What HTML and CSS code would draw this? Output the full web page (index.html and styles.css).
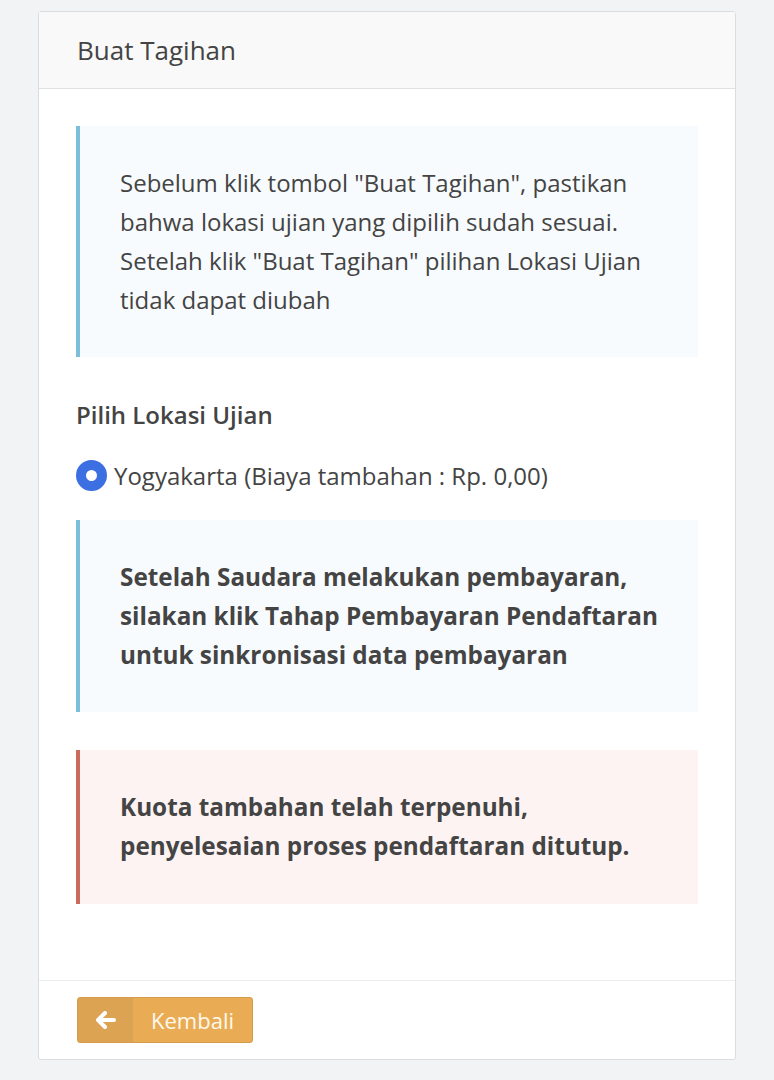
FILE: index.html
```html
<!DOCTYPE html>
<html lang="id">
<head>
<meta charset="utf-8">
<title>Buat Tagihan</title>
<link rel="stylesheet" href="styles.css">
</head>
<body>
<div class="card">
  <div class="card-header">Buat Tagihan</div>
  <div class="card-body">
    <div class="callout callout-info">
      <p>Sebelum klik tombol "Buat Tagihan", pastikan bahwa lokasi ujian yang dipilih sudah sesuai. Setelah klik "Buat Tagihan" pilihan Lokasi Ujian tidak dapat diubah</p>
    </div>
    <div class="field-label">Pilih Lokasi Ujian</div>
    <label class="radio-row">
      <span class="radio"></span>
      <span>Yogyakarta (Biaya tambahan : Rp. 0,00)</span>
    </label>
    <div class="callout callout-info">
      <p class="strong">Setelah Saudara melakukan pembayaran, silakan klik Tahap Pembayaran Pendaftaran untuk sinkronisasi data pembayaran</p>
    </div>
    <div class="callout callout-danger">
      <p class="strong">Kuota tambahan telah terpenuhi, penyelesaian proses pendaftaran ditutup.</p>
    </div>
  </div>
  <div class="card-footer">
    <button class="btn-back" type="button">
      <span class="btn-icon">
        <svg width="20" height="18" viewBox="0 0 20 18"><path d="M9 2 L2 9 L9 16 M2.5 9 H18" fill="none" stroke="#fff" stroke-width="4" stroke-linecap="round" stroke-linejoin="round"/></svg>
      </span>
      <span class="btn-label">Kembali</span>
    </button>
  </div>
</div>
</body>
</html>
```

FILE: styles.css
```css
* { box-sizing: border-box; }
html, body { margin: 0; padding: 0; }
body {
  background: #f2f3f5;
  font-family: "Open Sans", "Noto Sans", sans-serif;
  color: #444;
  padding: 11px 38px 22px;
}
.card {
  background: #fff;
  border: 1px solid #dcdde0;
  border-radius: 3px;
}
.card-header {
  background: #f9f9f9;
  border-bottom: 1px solid #e1e2e4;
  height: 77px;
  padding: 0 38px;
  display: flex;
  align-items: center;
  font-size: 26px;
  color: #444;
}
.card-body {
  padding: 37px 37px 76px;
}
.callout {
  border-left: 4px solid #7dbfda;
  background: #f8fbfd;
  padding: 37px 40px 38px;
}
.callout p {
  margin: 0;
  font-size: 24px;
  line-height: 39px;
}
.callout p.strong {
  font-weight: 700;
  font-size: 24.3px;
}
.callout-danger {
  border-left-color: #c96c5d;
  background: #fdf3f3;
  margin-top: 38px;
  padding-bottom: 39px;
}
.field-label {
  margin-top: 38px;
  font-size: 24px;
  font-weight: 600;
  line-height: 39px;
}
.radio-row {
  display: flex;
  align-items: center;
  gap: 7px;
  margin: 22px 0 25px;
  font-size: 24px;
  line-height: 39px;
}
.radio {
  width: 31px;
  height: 31px;
  border-radius: 50%;
  border: 10px solid #3c6fe1;
  background: #fff;
  flex: none;
}
.card-footer {
  border-top: 1px solid #eceded;
  padding: 16px 38px 16px;
}
.btn-back {
  display: flex;
  height: 46px;
  padding: 0;
  border: 1px solid #d49c4a;
  border-radius: 3px;
  overflow: hidden;
  background: #e9ac55;
  font-family: inherit;
  cursor: pointer;
}
.btn-icon {
  width: 55px;
  height: 100%;
  background: #dca352;
  display: flex;
  align-items: center;
  justify-content: center;
}
.btn-label {
  width: 119px;
  height: 100%;
  display: flex;
  align-items: center;
  justify-content: center;
  font-size: 22px;
  color: #fff8ec;
}
```
